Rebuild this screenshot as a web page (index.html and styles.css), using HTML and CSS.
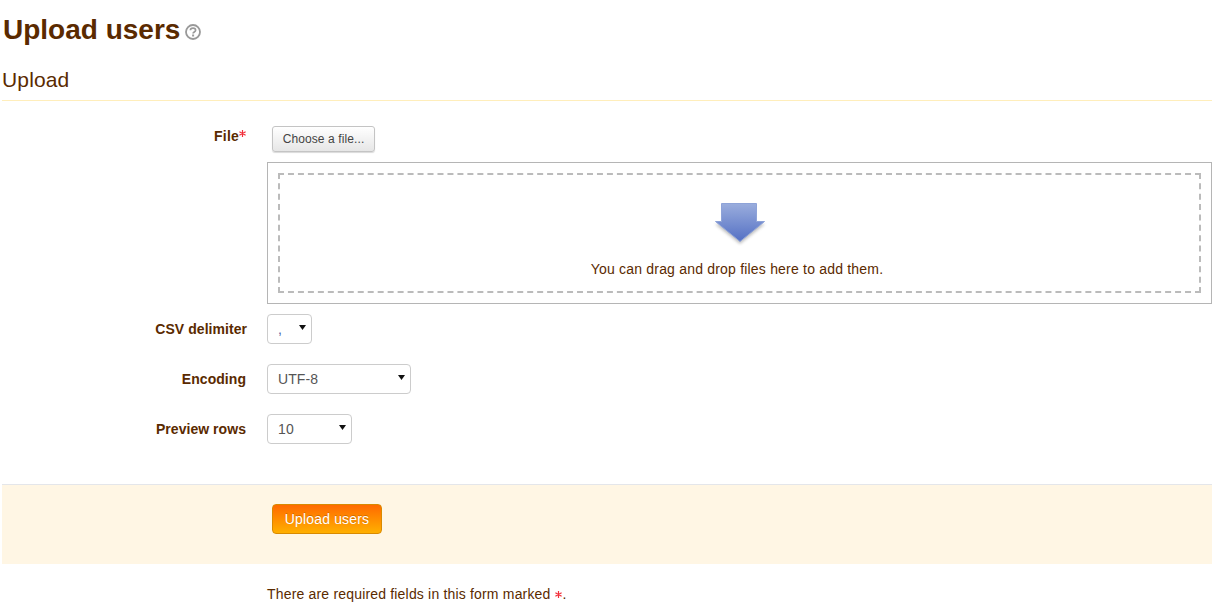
FILE: index.html
```html
<!DOCTYPE html>
<html lang="en">
<head>
<meta charset="utf-8">
<title>Upload users</title>
<link rel="stylesheet" href="styles.css">
</head>
<body>
<main class="page">
  <h2 class="title">Upload users<svg class="help" width="16" height="16" viewBox="0 0 16 16"><circle cx="8" cy="8" r="7" fill="none" stroke="#999" stroke-width="1.800"/><path d="M5.400 6.300c0-1.500 1.200-2.200 2.600-2.200s2.600.8 2.600 2.100c0 1.900-2.500 1.700-2.500 3.400" fill="none" stroke="#999" stroke-width="1.700"/><rect x="7.100" y="10.500" width="2" height="2" fill="#999"/></svg></h2>
  <form>
    <h3 class="section">Upload</h3>
    <div class="row row-file">
      <label class="label">File<svg class="star star-file" width="7" height="7" viewBox="0 0 7 7"><path d="M3.500 0V7M.4 1.700L6.600 5.300M.4 5.300L6.600 1.700" stroke="#f2303c" stroke-width="1.200"/></svg></label>
      <div class="field">
        <button type="button" class="choose">Choose a file...</button>
        <div class="drop">
          <div class="dashed">
            <svg class="arrow" width="54" height="44" viewBox="0 0 54 44">
              <defs>
                <linearGradient id="g" x1="0" y1="0" x2="0" y2="1"><stop offset="0" stop-color="#9aaddd"/><stop offset="1" stop-color="#5470c4"/></linearGradient>
                <filter id="s" x="-20%" y="-20%" width="140%" height="150%"><feGaussianBlur stdDeviation="1.500"/></filter>
              </defs>
              <path d="M2 21L27 41L52 21Z" fill="#777" opacity=".45" filter="url(#s)" transform="translate(0 1)"/>
              <path d="M8.500 1.500H43.500V19.500H51.500L27 39.500L2.500 19.500H8.500Z" fill="url(#g)" stroke="#8ea3d8"/>
            </svg>
            <p class="hint">You can drag and drop files here to add them.</p>
          </div>
        </div>
      </div>
    </div>
    <div class="row row-select">
      <label class="label" for="d">CSV delimiter</label>
      <div class="field"><select id="d" class="sel sel-d"><option>,</option></select></div>
    </div>
    <div class="row row-select">
      <label class="label lab-2" for="e">Encoding</label>
      <div class="field field-2"><select id="e" class="sel sel-e"><option>UTF-8</option></select></div>
    </div>
    <div class="row row-select">
      <label class="label lab-2" for="p">Preview rows</label>
      <div class="field field-2"><select id="p" class="sel sel-p"><option>10</option></select></div>
    </div>
    <div class="actions">
      <button type="button" class="submit">Upload users</button>
    </div>
    <p class="note">There are required fields in this form marked<svg class="star star-note" width="7" height="7" viewBox="0 0 7 7"><path d="M3.500 0V7M.4 1.700L6.600 5.300M.4 5.300L6.600 1.700" stroke="#f2303c" stroke-width="1.200"/></svg>.</p>
  </form>
</main>
</body>
</html>
```
FILE: styles.css
```css
* { box-sizing: border-box; }
html, body { margin: 0; background: #fff; }
body {
  font-family: "Liberation Sans", Arial, sans-serif;
  font-size: 14px;
  line-height: 20px;
  color: #5a2a00;
  height: 612px;
  overflow: hidden;
}
.page { padding: 0 9px 0 2px; }
.title {
  margin: 0;
  padding: 10px 0 0 1px;
  font-size: 28px;
  line-height: 40px;
  font-weight: 700;
  display: flex;
  align-items: center;
}
.help { margin: 3px 0 0 5px; }
.section {
  margin: 0;
  padding: 10px 0 0;
  height: 51px;
  font-size: 21px;
  line-height: 40px;
  font-weight: 400;
  letter-spacing: .15px;
  border-bottom: 1px solid #ffeebb;
}
.row { display: flex; }
.row-file { padding-top: 25px; }
.row-select { margin-bottom: 20px; height: 30px; }
.label {
  width: 245px;
  flex: none;
  text-align: right;
  font-weight: 700;
  line-height: 20px;
  letter-spacing: .05px;
}
.row-file .label { width: 244px; letter-spacing: .2px; }
.row-select .label { padding-top: 5px; }
.row-select .lab-2 { width: 244px; }
.star { display: inline-block; }
.star-file { vertical-align: 4px; }
.star-note { margin: 0 1px 0 4px; vertical-align: 1px; }
.field { margin-left: 20px; flex: 1; min-width: 0; }
.row-file .field, .field-2 { margin-left: 21px; }
.choose {
  display: block;
  margin: 0 0 10px 5px;
  width: 103px;
  height: 26px;
  padding: 0;
  font: 12px/16px "Liberation Sans", Arial, sans-serif;
  letter-spacing: .1px;
  color: #444;
  background: linear-gradient(#fff, #e6e6e6);
  border: 1px solid #c4c4c4;
  border-radius: 3px;
  box-shadow: 0 1px 1px rgba(0,0,0,.15);
}
.drop {
  border: 1px solid #b5b5b5;
  height: 142px;
  padding: 10px;
  margin-bottom: 10px;
}
.dashed {
  height: 120px;
  border: 2px dashed #bbb;
  text-align: center;
  padding-top: 27px;
}
.arrow { display: block; margin: 0 auto; }
.hint { margin: 13px 0 0; padding-right: 5px; line-height: 20px; letter-spacing: .2px; }
.sel {
  display: block;
  height: 30px;
  padding: 4px 10px;
  font: 14px/20px "Liberation Sans", Arial, sans-serif;
  letter-spacing: .1px;
  color: #555;
  appearance: none;
  -webkit-appearance: none;
  background: #fff url("data:image/svg+xml,%3Csvg xmlns='http://www.w3.org/2000/svg' width='7' height='5'%3E%3Cpath d='M0 0H7L3.500 5Z' fill='%23111'/%3E%3C/svg%3E") no-repeat;
  border: 1px solid #ccc;
  border-radius: 4px;
}
.sel-d { width: 45px; background-position: 31px 10px; color: #4a5fa8; }
.sel-e { width: 144px; background-position: 130px 10px; }
.sel-p { width: 85px; background-position: 71px 10px; }
.actions {
  margin-top: 40px;
  height: 80px;
  padding: 19px 0 0 270px;
  background: #fff6e4;
  border-top: 1px solid #e4e6ea;
}
.submit {
  display: block;
  width: 110px;
  height: 30px;
  padding: 0;
  font: 14px/20px "Liberation Sans", Arial, sans-serif;
  letter-spacing: .15px;
  color: #fff;
  text-shadow: 0 -1px 0 rgba(0,0,0,.2);
  background: linear-gradient(#ff6a00, #ffb000);
  border: 1px solid #d98a00;
  border-radius: 4px;
}
.note { margin: 20px 0 0 265px; line-height: 20px; letter-spacing: .18px; }
```
